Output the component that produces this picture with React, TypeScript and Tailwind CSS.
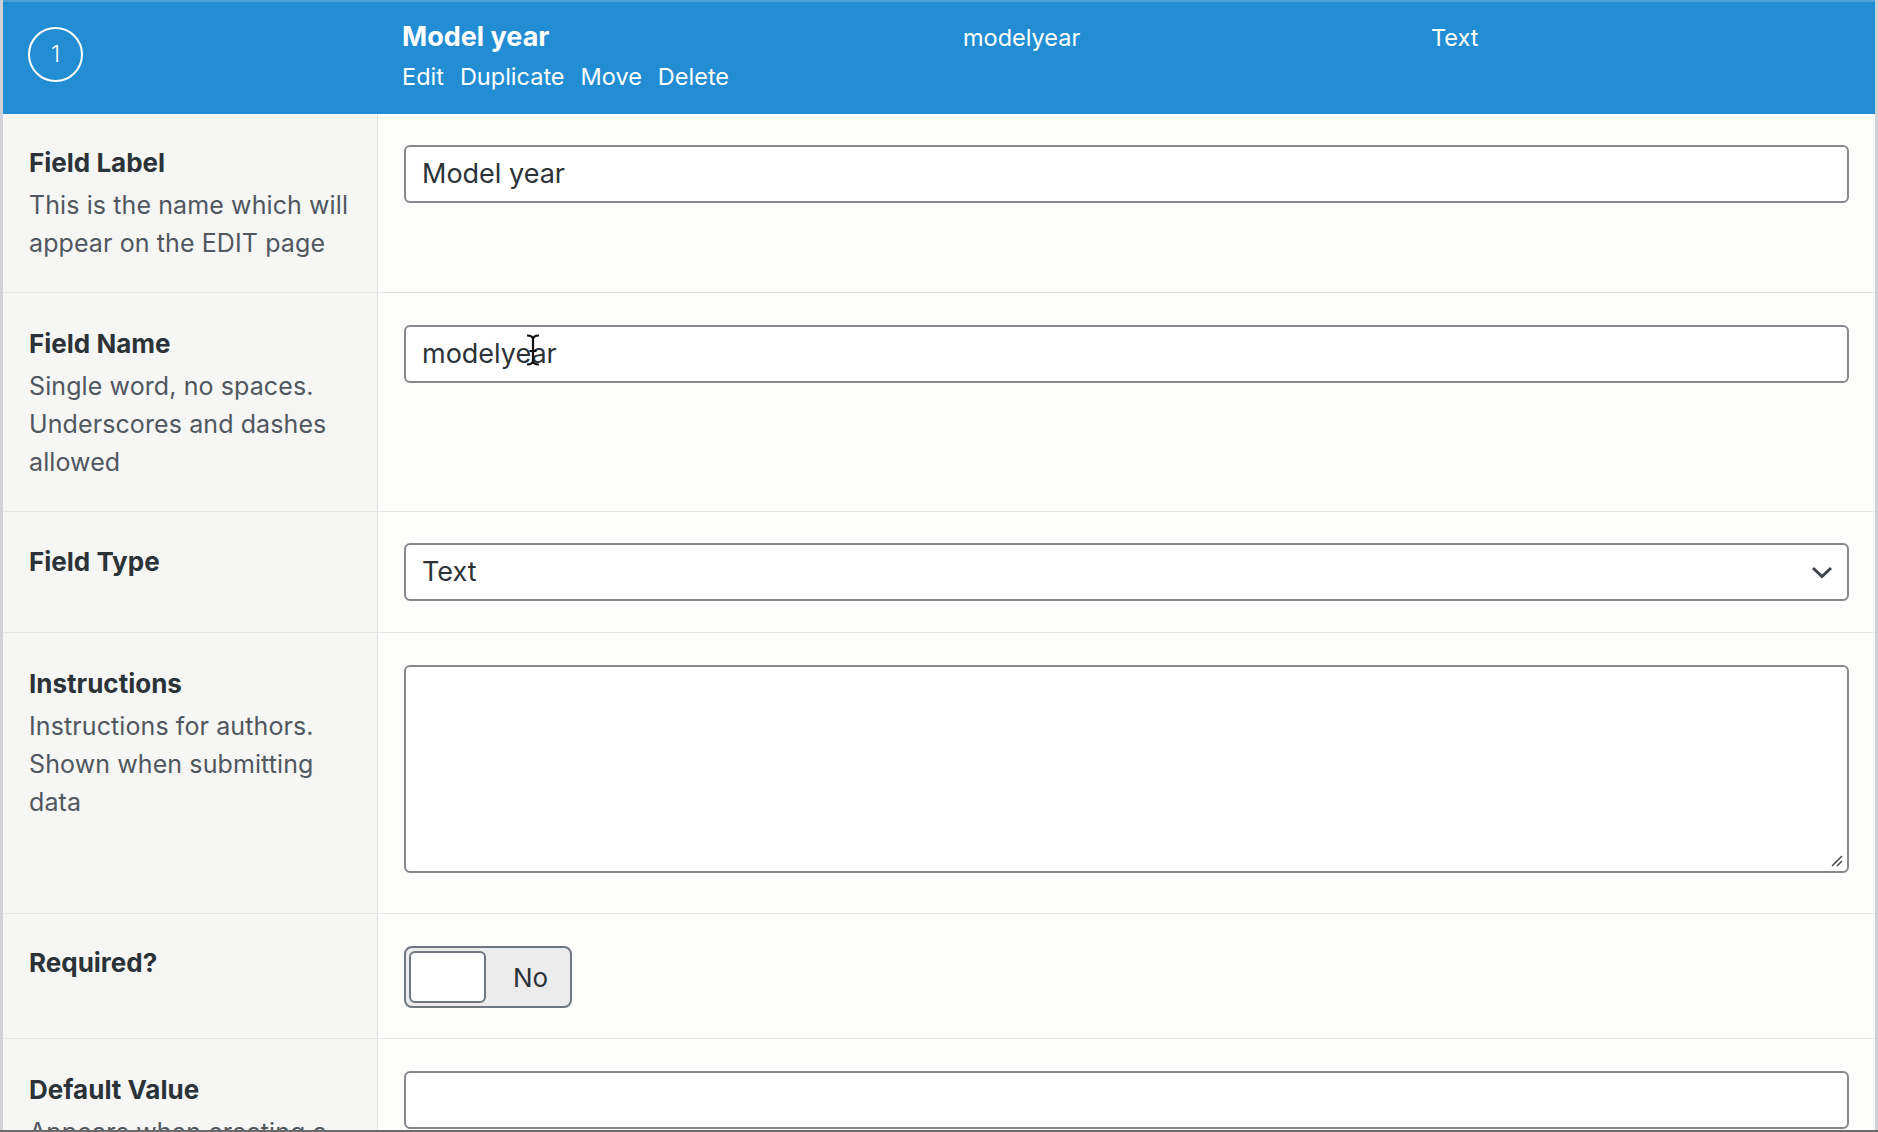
import React from "react";

const font = { fontFamily: "Inter, 'Noto Sans', sans-serif" };

function Row({
  label,
  desc,
  children,
  h,
  pt,
}: {
  label: string;
  desc?: string[];
  children: React.ReactNode;
  h: string;
  pt: string;
}) {
  return (
    <div className={`flex shrink-0 border-b border-[#e6e6e6] ${h}`}>
      <div className={`w-[375px] shrink-0 bg-[#f6f6f4] border-r border-[#e2e2e2] pl-[26px] pr-[20px] ${pt}`}>
        <div className="text-[26px] font-bold leading-[38px] text-[#2c3338]">{label}</div>
        {desc && (
          <div className="mt-[4px] text-[25px] leading-[38px] text-[#50575e] tracking-[0.1px]">
            {desc.map((d) => (
              <div key={d}>{d}</div>
            ))}
          </div>
        )}
      </div>
      <div className="flex-1 bg-[#fdfdfb] pl-[26px] pr-[26px]">{children}</div>
    </div>
  );
}

export default function App() {
  return (
    <div className="w-[1878px] h-[1132px] overflow-hidden bg-[#fdfdfb] relative" style={font}>
      <div className="h-full border-l-[3px] border-r-[3px] border-[#cfd3d8] flex flex-col">
        {/* Header */}
        <div className="h-[114px] shrink-0 bg-[#238dd4] border-t-2 border-[#4d9fd9] flex text-white">
          <div className="w-[375px] shrink-0 pl-[25px] pt-[25px]">
            <div className="w-[55px] h-[55px] rounded-full border-2 border-white flex items-center justify-center text-[23px] font-light">
              1
            </div>
          </div>
          <div className="w-[585px] shrink-0 pl-[24px] pt-[15px]">
            <div className="text-[27px] font-bold leading-[40px]">Model year</div>
            <div className="flex gap-[16px] text-[23.5px] leading-[36px] mt-[2px]">
              <span>Edit</span>
              <span>Duplicate</span>
              <span>Move</span>
              <span>Delete</span>
            </div>
          </div>
          <div className="w-[468px] shrink-0 pt-[18px] text-[23.5px] leading-[36px]">modelyear</div>
          <div className="pt-[18px] text-[23.5px] leading-[36px]">Text</div>
        </div>

        {/* Field Label */}
        <Row label="Field Label" desc={["This is the name which will", "appear on the EDIT page"]} h="h-[179px]" pt="pt-[30px]">
          <div className="mt-[31px] h-[58px] rounded-[6px] border-2 border-[#85888d] bg-white flex items-center pl-[16px] text-[27px] text-[#2c3338]">
            Model year
          </div>
        </Row>

        {/* Field Name */}
        <Row
          label="Field Name"
          desc={["Single word, no spaces.", "Underscores and dashes", "allowed"]}
          h="h-[219px]"
          pt="pt-[32px]"
        >
          <div className="relative mt-[32px] h-[58px] rounded-[6px] border-2 border-[#85888d] bg-white flex items-center pl-[16px] text-[27px] text-[#2c3338]">
            modelyear
            <svg className="absolute left-[120px] top-[7px]" width="14" height="32" viewBox="0 0 14 32">
              <path
                d="M1 1.5 Q7 1.5 7 5.5 Q7 1.5 13 1.5 M7 5.5 L7 26.5 Q7 30.5 1 30.5 M7 26.5 Q7 30.5 13 30.5 M3.5 17 L10.5 17"
                fill="none"
                stroke="#111"
                strokeWidth="2.2"
              />
            </svg>
          </div>
        </Row>

        {/* Field Type */}
        <Row label="Field Type" h="h-[121px]" pt="pt-[31px]">
          <div className="mt-[31px] h-[58px] rounded-[6px] border-2 border-[#85888d] bg-white flex items-center justify-between pl-[16px] pr-[14px] text-[27px] text-[#2c3338]">
            <span>Text</span>
            <svg width="22" height="13" viewBox="0 0 22 13">
              <path d="M2 2 L11 10.5 L20 2" fill="none" stroke="#3c434a" strokeWidth="3" />
            </svg>
          </div>
        </Row>

        {/* Instructions */}
        <Row
          label="Instructions"
          desc={["Instructions for authors.", "Shown when submitting", "data"]}
          h="h-[281px]"
          pt="pt-[32px]"
        >
          <div className="relative mt-[32px] h-[208px] rounded-[6px] border-2 border-[#85888d] bg-white">
            <svg className="absolute right-[3px] bottom-[3px]" width="14" height="14" viewBox="0 0 14 14">
              <path d="M2 12 L12 2 M7 12 L12 7" fill="none" stroke="#444" strokeWidth="1.5" />
            </svg>
          </div>
        </Row>

        {/* Required */}
        <Row label="Required?" h="h-[125px]" pt="pt-[30px]">
          <div className="mt-[32px] w-[168px] h-[62px] rounded-[8px] border-2 border-[#6f7780] bg-[#ececec] flex items-center p-[3px]">
            <div className="w-[77px] h-[52px] rounded-[6px] border-2 border-[#6f7780] bg-white" />
            <span className="ml-[27px] text-[26px] text-[#2c3338]">No</span>
          </div>
        </Row>

        {/* Default Value */}
        <Row label="Default Value" desc={["Appears when creating a"]} h="h-[120px]" pt="pt-[32px]">
          <div className="mt-[32px] h-[58px] rounded-[6px] border-2 border-[#85888d] bg-white" />
        </Row>
      </div>
      <div className="absolute left-0 right-0 bottom-0 h-[2px] bg-[#6b6b6b]" />
    </div>
  );
}
